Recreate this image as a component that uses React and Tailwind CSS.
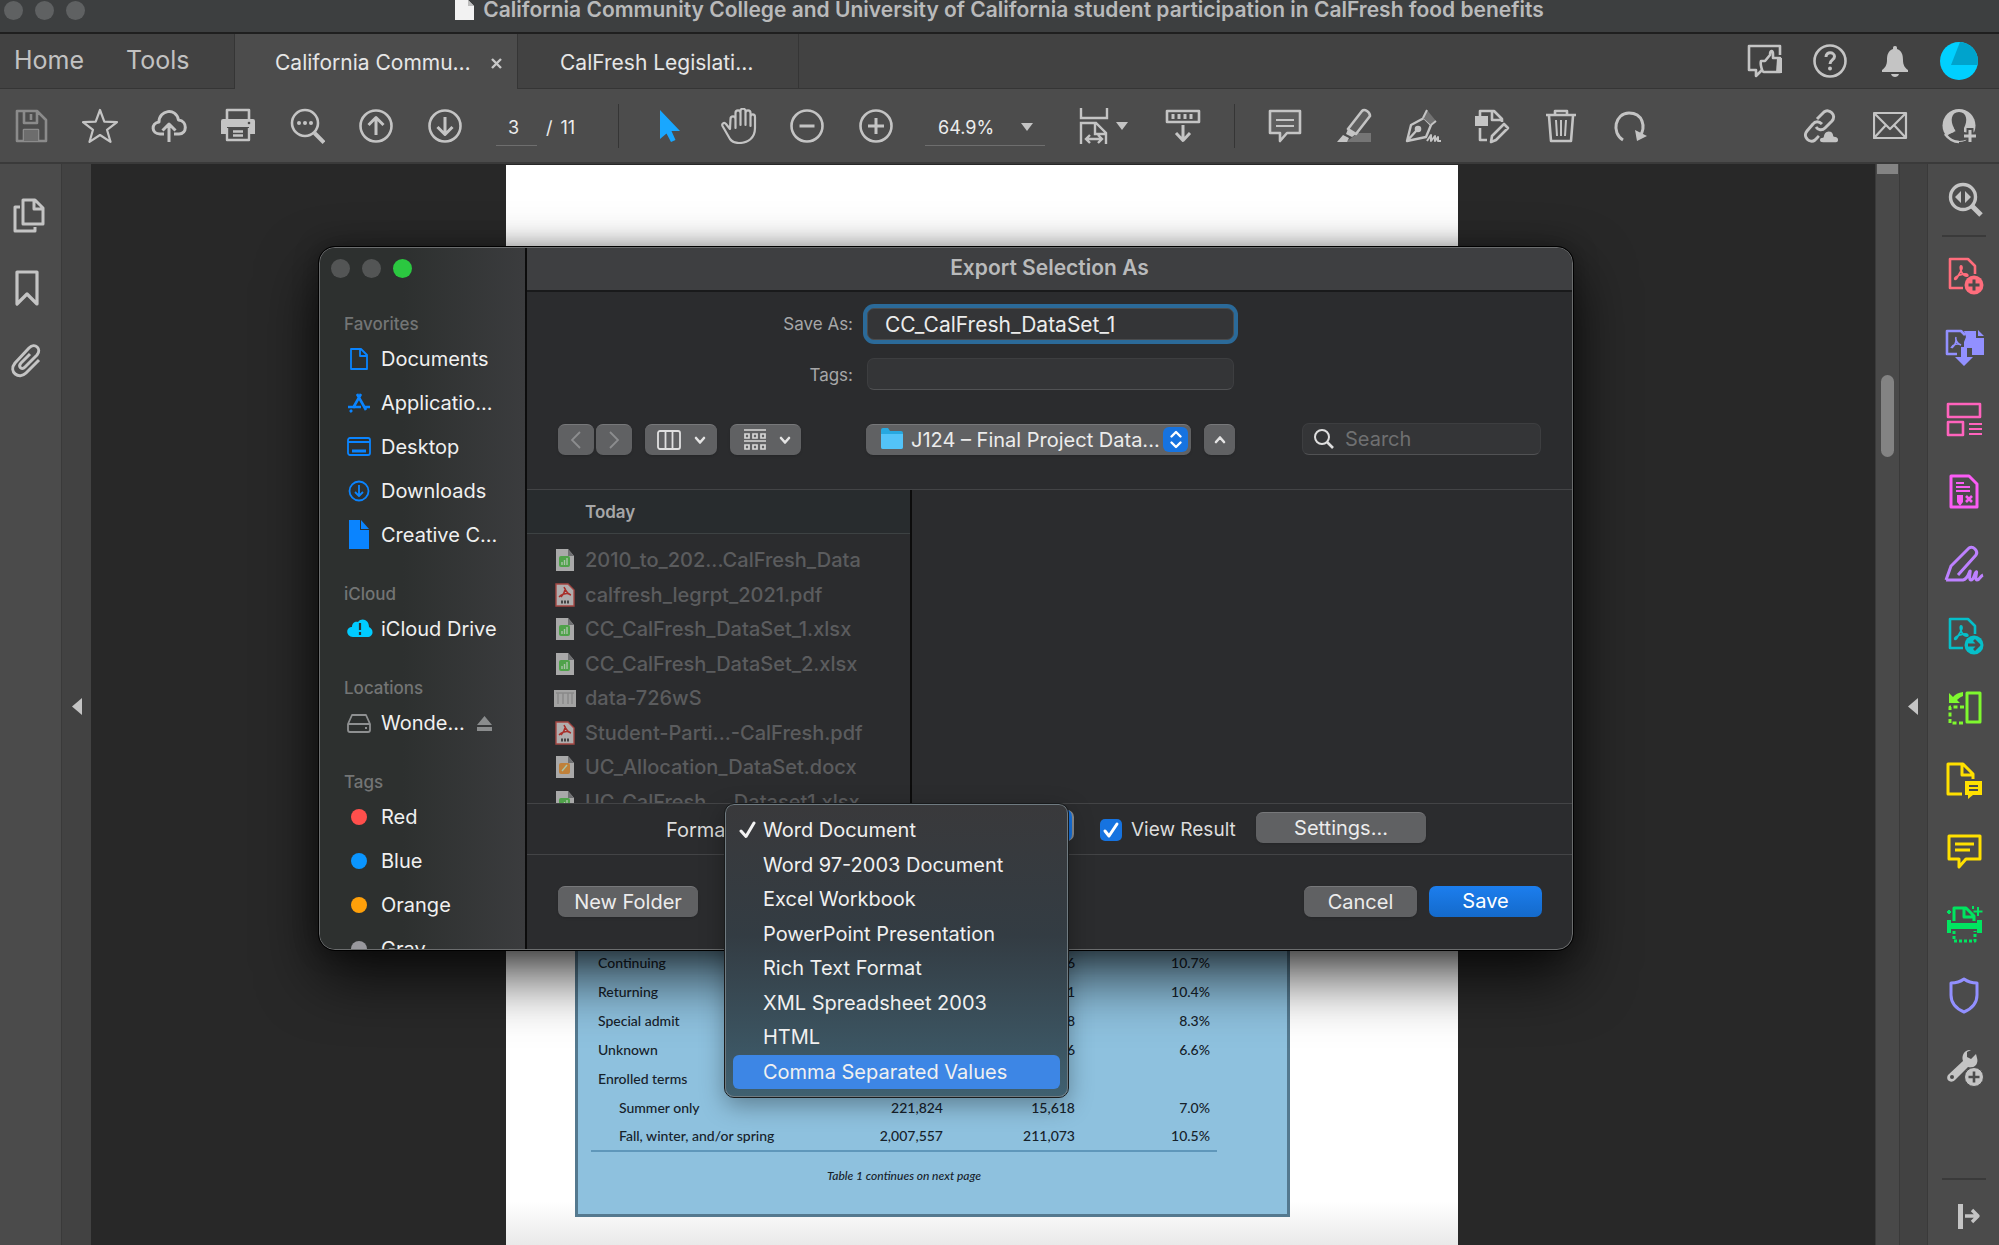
import React from "react";

const I = ({ size = 36, children, label, className = "" }) => (
  <svg
    viewBox={`0 0 ${size} ${size}`}
    width={size}
    height={size}
    fill="none"
    stroke="currentColor"
    strokeWidth="2.6"
    strokeLinejoin="round"
    aria-label={label}
    className={"shrink-0 " + className}
  >
    {children}
  </svg>
);

const ToolButton = ({ label, children, className = "" }) => (
  <button type="button" aria-label={label} className={"flex size-9 shrink-0 items-center justify-center " + className}>
    <I>{children}</I>
  </button>
);

const Divider = () => <div className="h-[44px] w-px shrink-0 bg-[#353535]" />;

const Acrobat = () => (
  <path
    strokeWidth="1.8"
    d="M17 10c-1 0-1 3 .5 6 1.500 3 4 4 5.500 4s1-2-2-2-9 2-10 4 1 2 2.500-1S18 14 18 12s-.3-2-1-2z"
  />
);

function TitleBar() {
  return (
    <header className="relative flex h-[34px] shrink-0 items-start justify-center border-b-2 border-[#1f1f1f] bg-[#3d3f40]">
      <div className="absolute top-px left-1 flex gap-3">
        <span className="size-[19px] rounded-full bg-[#5f6162]" />
        <span className="size-[19px] rounded-full bg-[#5f6162]" />
        <span className="size-[19px] rounded-full bg-[#5f6162]" />
      </div>
      <div className="flex h-5 items-center gap-[9px] text-[21px] leading-5 font-semibold whitespace-nowrap text-[#b9babb]">
        <svg width="19" height="20" viewBox="0 0 19 20" aria-hidden="true">
          <path d="M0 0h13l6 6v14H0z" fill="#f2f2f2" />
          <path d="M13 0v6h6z" fill="#bdbdbd" />
        </svg>
        <h1>California Community College and University of California student participation in CalFresh food benefits</h1>
      </div>
    </header>
  );
}

function TabBar() {
  return (
    <nav className="flex h-[55px] shrink-0 bg-[#424242] text-[#e6e6e6]">
      <div className="flex w-[235px] shrink-0 items-center gap-[42px] border-r border-b border-[#353535] pl-[14px] text-[25px] text-[#c2c2c2]">
        <button type="button">Home</button>
        <button type="button">Tools</button>
      </div>
      <div className="flex w-[282px] shrink-0 items-center justify-between bg-[#4c4c4c] pt-[3px] pr-[14px] pl-10 text-[21px]">
        <button type="button">California Commu…</button>
        <button type="button" aria-label="Close tab">
          <svg width="13" height="13" viewBox="0 0 13 13" stroke="#c8c8c8" strokeWidth="2.400">
            <path d="M2 2l9 9M11 2l-9 9" />
          </svg>
        </button>
      </div>
      <div className="flex w-[282px] shrink-0 items-center border-r border-b border-l border-[#353535] pt-1 pl-[42px] text-[21px]">
        <button type="button">CalFresh Legislati…</button>
      </div>
      <div className="flex grow items-center justify-end border-b border-[#353535] pr-[21px] text-[#c4c4c4]">
        <div className="mr-[27px] flex gap-[29px]">
          <button type="button" aria-label="Feedback">
            <I>
              <path d="M33 12V3H2v24h7v6l6-6" />
              <path d="M14 18h4l5-6c0-5 3-5 3-1v4h7v14H17c-2 0-4-8-3-11z" fill="#424242" />
              <path d="M30 15h5v15h-6z" fill="currentColor" stroke="none" />
            </I>
          </button>
          <button type="button" aria-label="Help">
            <I>
              <circle cx="18" cy="18" r="15.500" />
              <path d="M14 14c0-6 8.500-5 8.500-.5 0 3.500-4.500 3.500-4.500 7.500" strokeWidth="3" />
              <circle cx="18" cy="25.500" r="2" fill="currentColor" stroke="none" />
            </I>
          </button>
          <button type="button" aria-label="Notifications">
            <I>
              <path
                d="M18 3c2 0 2 1 2 3 5 2 6 6 6 11s2 8 5 10v2H5v-2c3-2 5-5 5-10s1-9 6-11c0-2 0-3 2-3zM14 31h8c-1 4-7 4-8 0z"
                fill="currentColor"
                stroke="none"
              />
            </I>
          </button>
        </div>
        <button type="button" aria-label="Account">
          <svg width="38" height="38" viewBox="0 0 38 38">
            <circle cx="19" cy="19" r="19" fill="#00d0ff" />
            <path d="M20 0A19 19 0 0 1 37.500 23H11z" fill="#00a3cc" />
          </svg>
        </button>
      </div>
    </nav>
  );
}

const Caret = () => (
  <svg width="12" height="8" viewBox="0 0 12 8" fill="#c4c4c4" className="shrink-0" aria-hidden="true">
    <path d="M0 0h12L6 8z" />
  </svg>
);

function ToolBar() {
  return (
    <div className="flex h-[75px] shrink-0 items-center border-b-2 border-[#3a3a3a] bg-[#4c4c4c] pt-px pr-[21px] pl-[13px] text-[#c4c4c4]">
      <div className="flex gap-[33px]">
        <ToolButton label="Save" className="text-[#8b8b8b]">
          <path d="M4 3h20l9 9v21H4zM11 3v12h13V3M18 6v6M11 33V22h14v11" />
          <path d="M11 22h14v11H11z" fill="#6d6d6d" stroke="none" />
        </ToolButton>
        <ToolButton label="Star">
          <path d="M18 2l4.300 11.600 12.700.5-10 7.700 3.500 12L18 27 7.500 33.800l3.500-12-10-7.700 12.700-.5z" strokeWidth="2.200" />
        </ToolButton>
        <ToolButton label="Upload">
          <path d="M13 26H9c-9 0-9-11-1-12C8 2 25-1 27.500 12 37 13 36 26 28 26h-5M18 34V17M11.500 22.500L18 16l6.500 6.500" strokeWidth="3" />
        </ToolButton>
        <ToolButton label="Print">
          <path d="M7 11V2h22v9" />
          <path d="M3 11h30q2 0 2 2v13h-6v-7H7v7H1V13q0-2 2-2z" fill="currentColor" stroke="none" />
          <path d="M7 20v12h22V20M13 23.500h10M13 27.500h10" strokeWidth="2.400" />
          <circle cx="29" cy="15" r="1.300" fill="#4c4c4c" stroke="none" />
        </ToolButton>
        <ToolButton label="Find">
          <circle cx="16" cy="15" r="13" />
          <path d="M25.500 25l9.500 9.500" strokeWidth="4" />
          <g fill="currentColor" stroke="none">
            <circle cx="10" cy="15" r="2" />
            <circle cx="16" cy="15" r="2" />
            <circle cx="22" cy="15" r="2" />
          </g>
        </ToolButton>
        <ToolButton label="Previous page">
          <circle cx="18" cy="18" r="15.500" />
          <path d="M18 27V10M10.500 17L18 9.500 25.500 17" strokeWidth="3" />
        </ToolButton>
        <ToolButton label="Next page">
          <circle cx="18" cy="18" r="15.500" />
          <path d="M18 9v17M10.500 19l7.500 7.500 7.500-7.500" strokeWidth="3" />
        </ToolButton>
      </div>
      <div className="ml-[33px] flex w-[122px] shrink-0 items-center text-[18px] text-[#ececec]">
        <input aria-label="Page" defaultValue="3" className="h-10 w-[41px] border-b border-[#6e6e6e] bg-transparent pt-[3px] pr-1.5 text-center" />
        <span className="ml-[9px] flex gap-2 pt-[3px]">
          <span>/</span>
          <span>11</span>
        </span>
      </div>
      <Divider />
      <div className="ml-[33px] flex gap-[33px]">
        <ToolButton label="Select">
          <path d="M8 2v29l6.500-5.500L19 34l4.500-2-4-9H28z" fill="#19a7ff" stroke="none" />
        </ToolButton>
        <ToolButton label="Hand">
          <path
            d="M9 21L5 16c-2-2.500-4.500 0-3.500 2L9 31q3 4 9 4c9 0 16-5 16-15V9c0-3.500-4.500-3.500-4.500 0v9-13c0-3.500-5-3.500-5 0v12V3c0-3-5-3-5 0v14V5c0-3.500-5-3.500-5 0v15-9c0-3.500-5-3.500-5 0z"
            strokeWidth="2.200"
          />
        </ToolButton>
        <ToolButton label="Zoom out">
          <circle cx="17" cy="18" r="15.500" />
          <path d="M9.500 18h15" strokeWidth="3" />
        </ToolButton>
        <ToolButton label="Zoom in">
          <circle cx="17" cy="18" r="15.500" />
          <path d="M9 18h16M17 10v16" strokeWidth="3" />
        </ToolButton>
      </div>
      <button type="button" className="ml-[30px] flex h-10 w-[120px] shrink-0 items-center justify-between border-b border-[#6e6e6e] pt-[3px] pr-3 pl-[13px] text-[18px] text-[#ececec]">
        64.9%
        <Caret />
      </button>
      <button type="button" aria-label="Fit" className="ml-[32px] flex w-[51px] shrink-0 items-center justify-between">
        <I>
          <path d="M4 0v10h26V0M4 36V15h15l10 10v11M18 15v11h11M9 31h16M13 27l-4 4 4 4M21 27l4 4-4 4" strokeWidth="2.400" strokeLinejoin="miter" />
        </I>
        <Caret />
      </button>
      <ToolButton label="Read mode" className="mr-[33px] ml-[37px]">
        <rect x="2" y="3" width="32" height="11" />
        <path d="M8 6v5M14 6v5M20 6v5M26 6v5" strokeWidth="3" />
        <path d="M18 17v15M11 25l7 7.500 7-7.500" strokeWidth="3" />
      </ToolButton>
      <Divider />
      <div className="ml-[32px] flex gap-[33px]">
        <ToolButton label="Comment">
          <path d="M3 3h30v22H20l-7 8v-8H3z" fill="#5e5e5e" />
          <path d="M9 12h18M9 18h18" strokeWidth="2" />
        </ToolButton>
        <ToolButton label="Highlight">
          <path d="M22 25h13v9H10z" fill="#757575" stroke="none" />
          <path d="M26 3q2-2 5 0t3 5L20 26l-8-5z" fill="#5e5e5e" />
          <path d="M12 21l8 5-4 3-6-3zM7 27l6 3-2 4H1z" fill="currentColor" stroke="none" />
        </ToolButton>
        <ToolButton label="Sign">
          <path d="M2 33L6 17l13-7 7 7-5 12zM2 33l10-11" strokeWidth="2.400" />
          <circle cx="13" cy="21" r="2" fill="currentColor" />
          <path d="M18 10l4-8 9 11-5 4z" fill="#727272" stroke="none" />
          <path d="M18 10l4-8M26 17l5-4M22 33l4-6v6l4-5v5l3-4v4h3" strokeWidth="2" />
        </ToolButton>
        <ToolButton label="Edit PDF">
          <path d="M6 9V3h14l8 8v3M18 3v9h10" />
          <path d="M1 8h13v10H1z" fill="currentColor" stroke="none" />
          <path d="M6 20v12h7M17 34l1-6 12-12 4 4-12 12z" />
        </ToolButton>
        <ToolButton label="Delete">
          <path d="M3 7h30M12 7V3h12v4M6 8l2 25h20l2-25" />
          <path d="M13 12l1 16M18 12v16M23 12l-1 16" strokeWidth="2" />
        </ToolButton>
        <ToolButton label="Rotate">
          <path d="M11 32C-1 25 3 5 17 5s17 14 11 23" strokeWidth="3" />
          <path d="M23 22l2 11 10-5z" fill="currentColor" stroke="none" />
        </ToolButton>
      </div>
      <div className="ml-auto flex gap-[33px]">
        <ToolButton label="Share link">
          <path d="M13 11l7-7c5-4 13 3 8 9l-7 7c-3 3-7 2-9-1M18 16c-3-3-7-3-9 0l-6 7c-5 6 3 13 8 9l4-4" strokeWidth="3" />
          <path d="M19 35c-5 0-5-6 0-6 1-8 10-8 11-1 6 0 6 7 2 7z" fill="currentColor" stroke="#4c4c4c" strokeWidth="1.500" />
        </ToolButton>
        <ToolButton label="Email">
          <path d="M1 5h32v25H1zM1 5l16 16L33 5M1 30l12-13M33 30L21 17" strokeWidth="2.200" />
        </ToolButton>
        <ToolButton label="Invite">
          <circle cx="17" cy="17.500" r="16.500" fill="currentColor" stroke="none" />
          <path d="M17 4c8 0 9 9 5 16v4l7 3-3 4q-9 4-18 0l-3-4 7-3v-4C8 13 9 4 17 4z" fill="#4c4c4c" stroke="none" />
          <path d="M5 26c4-3 6-3 8-4M3 26q6 8 14 8" strokeWidth="2.600" />
          <path d="M28 20v16M20 28h16" stroke="#4c4c4c" strokeWidth="7" />
          <path d="M28 22v12M22 28h12" strokeWidth="3" />
        </ToolButton>
      </div>
    </div>
  );
}

function LeftRail() {
  return (
    <>
      <aside className="flex w-[61px] shrink-0 flex-col gap-[37px] bg-[#4b4b4b] pt-[33px] pl-[9px] text-[#c4c4c4]">
        <ToolButton label="Page thumbnails">
          <path d="M14 3h12l8 8v16H14zM25 3v9h9" strokeWidth="3" />
          <path d="M11 10H6v24h20v-4" strokeWidth="3" />
        </ToolButton>
        <ToolButton label="Bookmarks">
          <path d="M8 2h20v32l-10-10L8 34z" strokeWidth="3.200" />
        </ToolButton>
        <ToolButton label="Attachments">
          <path d="M30 17L17 30c-7 7-18-1-11-10L20 5c6-6 13 1 8 7L16 24c-4 4-7-1-4-4l9-9" strokeWidth="3" />
        </ToolButton>
      </aside>
      <button type="button" aria-label="Expand navigation" className="flex w-[30px] shrink-0 items-center justify-center border-l border-[#3a3a3a] bg-[#424242] pt-1">
        <svg width="10" height="17" viewBox="0 0 10 17" fill="#c4c4c4">
          <path d="M10 0v17L0 8.500z" />
        </svg>
      </button>
    </>
  );
}

const tools = [
  ["Create PDF", "text-[#ff6d7c]", (
    <>
      <path d="M19 32H6V3h18l7 7v8" />
      <Acrobat />
      <circle cx="30" cy="29" r="9.500" fill="currentColor" stroke="none" />
      <path d="M30 23.500v11M24.500 29h11" stroke="#4b4b4b" strokeWidth="3" />
    </>
  )],
  ["Export PDF", "text-[#9290ff]", (
    <>
      <path d="M13 26H3V3h14l4 4" />
      <path strokeWidth="1.600" d="M12 9c-1 2 1 7 5 8M7 20c2-4 7-5 10-3M12 12c0 3-2 6-4 8" />
      <path d="M20 3h12v7h8v17H28v-7h-8v-6l2-5zM34 2l6 6h-6z" fill="currentColor" stroke="none" />
      <path d="M17 19h6v10h6l-9 9-9-9h6z" fill="currentColor" stroke="none" />
    </>
  )],
  ["Organize Pages", "text-[#ff63bd]", (
    <>
      <rect x="4" y="4" width="32" height="13" />
      <rect x="4" y="22" width="15" height="13" />
      <path d="M25 24h13M25 29h13M25 34h13" strokeWidth="1.800" />
    </>
  )],
  ["Prepare Form", "text-[#fb5cf5]", (
    <>
      <path d="M7 4h18l8 8v23H7z" strokeWidth="3" />
      <path d="M12 11h8M12 15h14M12 19h14" strokeWidth="1.800" />
      <path d="M13 23h6v7l-3 4-3-4z" fill="currentColor" stroke="none" />
      <path d="M22 24l6 6M28 24l-6 6" />
    </>
  )],
  ["Fill & Sign", "text-[#bd81ff]", (
    <path d="M2 36l5-14L25 4q3-2 6 1t1 6L14 31M2 36h17c5-1 6-8 7-9s-2 9 1 9 3-6 5-8-2 8 1 8 3-4 6-5" strokeWidth="3" />
  )],
  ["Send for Review", "text-[#06bfc9]", (
    <>
      <path d="M19 32H6V3h18l7 7v8" />
      <Acrobat />
      <circle cx="30" cy="29" r="9.500" fill="currentColor" stroke="none" />
      <path d="M24 29h10M30 24l5 5-5 5" stroke="#4b4b4b" strokeWidth="2.800" />
    </>
  )],
  ["Compare Files", "text-[#7ff82f]", (
    <>
      <rect x="23" y="5" width="13" height="29" strokeWidth="3" />
      <path d="M20 19H6v16h14" strokeDasharray="4 2.500" strokeWidth="3" />
      <path d="M5 5v10h11l-3-3q3-3 6-4V4q-7 1-10 5z" fill="currentColor" stroke="none" />
    </>
  )],
  ["Combine Files", "text-[#ffe000]", (
    <>
      <path d="M18 34H4V4h15l10 10v5M18 4v11h11" strokeWidth="3" />
      <path d="M21 21h17v14H29l-5 4v-4h-3z" fill="currentColor" stroke="none" />
      <path d="M25 26h9M25 30h9" stroke="#4b4b4b" strokeWidth="1.800" />
    </>
  )],
  ["Comment", "text-[#ffe000]", (
    <>
      <path d="M5 4h31v23H22l-7 8v-8H5z" strokeWidth="3" />
      <path d="M11 12h19M11 18h15" strokeWidth="3" />
    </>
  )],
  ["Scan & OCR", "text-[#00e560]", (
    <>
      <path d="M10 17V4h12l8 8v5M20 4v9h9" strokeWidth="3" />
      <path d="M3 16h4v3h26v-3h5v13h-5v-4H7v4H3z" fill="currentColor" stroke="none" />
      <path d="M10 27v10h21V27" strokeDasharray="3 2" strokeWidth="3" />
      <path d="M34 3v9M29.500 7.500h9M5 6v4M3 8h4M29 2v3" strokeWidth="2" />
    </>
  )],
  ["Protect", "text-[#9290ff]", (
    <path d="M20 3c4 3 9 4 13 4v12c0 9-6 14-13 17C13 33 7 28 7 19V7c4 0 9-1 13-4z" strokeWidth="3" />
  )],
  ["More Tools", "text-[#c4c4c4]", (
    <>
      <path d="M32 6l-5 5-4-2v-5l4-2c-6-1-10 5-8 11L4 27c-3 5 3 9 7 5l13-13c6 2 11-3 9-9z" fill="currentColor" stroke="none" />
      <circle cx="8" cy="29" r="2" fill="#4b4b4b" stroke="none" />
      <circle cx="30" cy="29" r="9.500" fill="currentColor" stroke="#4b4b4b" strokeWidth="1" />
      <path d="M30 23.500v11M24.500 29h11" stroke="#4b4b4b" strokeWidth="2.600" />
    </>
  )],
];

function RightRail() {
  return (
    <>
      <div className="flex w-6 shrink-0 flex-col items-center border-l border-[#3a3a3a] bg-[#494949]">
        <div className="h-[10px] w-[21px] bg-[#838383]" />
        <div className="mt-[201px] h-[82px] w-[13px] rounded-full bg-[#838383]" />
      </div>
      <button type="button" aria-label="Expand tools" className="flex w-[29px] shrink-0 items-center justify-center border-x border-[#3a3a3a] bg-[#424242] pt-1 pr-0.5">
        <svg width="10" height="17" viewBox="0 0 10 17" fill="#c4c4c4">
          <path d="M10 0v17L0 8.500z" />
        </svg>
      </button>
      <aside className="flex w-[71px] shrink-0 flex-col items-center bg-[#4b4b4b]">
        <button type="button" aria-label="Search tools" className="mt-[14px] text-[#c4c4c4]">
          <I size={40}>
            <circle cx="19" cy="19" r="12.500" strokeWidth="3.400" />
            <path d="M28 28l9 9" strokeWidth="5" />
            <path d="M17 13v12l-6-6zM21 13v12l6-6z" fill="currentColor" stroke="none" />
          </I>
        </button>
        <div className="mt-[17px] mb-[3px] h-[2px] w-[44px] shrink-0 bg-[#3a3a3a]" />
        {tools.map(([label, color, icon]) => (
          <button key={label} type="button" aria-label={label} className={"flex h-[72px] shrink-0 items-center " + color}>
            <I size={40}>{icon}</I>
          </button>
        ))}
        <div className="mt-auto h-[2px] w-[44px] bg-[#3a3a3a]" />
        <button type="button" aria-label="Collapse tools" className="mt-4 mb-[9px] text-[#c4c4c4]">
          <I size={40}>
            <path d="M14 8h5v25h-5z" fill="currentColor" stroke="none" />
            <path d="M21 20h12M28 14l6 6-6 6" strokeWidth="3.400" />
          </I>
        </button>
      </aside>
    </>
  );
}

const rows = [
  ["Continuing", "", "6", "10.7%"],
  ["Returning", "", "1", "10.4%"],
  ["Special admit", "", "8", "8.3%"],
  ["Unknown", "", "6", "6.6%"],
  ["Enrolled terms", "", "", ""],
  ["Summer only", "221,824", "15,618", "7.0%"],
  ["Fall, winter, and/or spring", "2,007,557", "211,073", "10.5%"],
];

function DocumentPage() {
  return (
    <main className="flex min-w-0 grow justify-center overflow-hidden bg-[#282828] pt-px pr-0.5">
      <div className="flex w-[952px] shrink-0 flex-col justify-end bg-linear-to-t from-[#e9e9e9] to-white to-4% px-[69px] pb-[28px]">
        <section className="flex h-[640px] w-[715px] flex-col justify-end border-[3px] border-[#54798f] bg-[#8ec1de] px-[13px] pb-[28px] text-[#16222b]">
          <table className="w-[626px] border-b-2 border-[#5f97ba] font-[Lato,sans-serif] text-[14px] leading-5 font-medium">
            <tbody>
              {rows.map(([name, total, count, share], i) => (
                <tr key={name} className="h-[29px]">
                  <th scope="row" className={"text-left font-medium whitespace-nowrap " + (i > 4 ? "pl-7" : "pl-[7px]")}>{name}</th>
                  <td className="w-[130px] text-right">{total}</td>
                  <td className="w-[132px] text-right">{count}</td>
                  <td className="w-[142px] pr-[7px] text-right">{share}</td>
                </tr>
              ))}
            </tbody>
          </table>
          <p className="mt-[14px] w-[626px] text-center font-[Lato,sans-serif] text-[12px] leading-5 font-medium italic">Table 1 continues on next page</p>
        </section>
      </div>
    </main>
  );
}

const BlueIcon = ({ children, color = "#0a84ff" }) => (
  <svg width="24" height="30" viewBox="0 0 24 30" fill="none" stroke={color} strokeWidth="1.800" strokeLinejoin="round" className="shrink-0" aria-hidden="true">
    {children}
  </svg>
);

const Dot = ({ color }) => (
  <BlueIcon>
    <circle cx="12" cy="15" r="8" fill={color} stroke="none" />
  </BlueIcon>
);

const sections = [
  ["Favorites", [
    ["Documents", <BlueIcon><path d="M4 5h10l6 6v14H4zM13 5v7h7" /></BlueIcon>],
    ["Applicatio...", (
      <BlueIcon>
        <path d="M10 6l9 16M14 6L6 20M1 19h13M18 19h5M5 22l-2 2" strokeWidth="2.600" />
      </BlueIcon>
    )],
    ["Desktop", <BlueIcon><rect x="1" y="6" width="22" height="17" rx="2" /><path d="M1 10h22" /><path d="M5 19h14" strokeWidth="3" /></BlueIcon>],
    ["Downloads", <BlueIcon><circle cx="12" cy="15" r="9.500" /><path d="M12 9v11M8 16l4 4 4-4" /></BlueIcon>],
    ["Creative C...", <BlueIcon><path d="M2 0h11v10h9v19H2zM14 0l8 9h-8z" fill="#0a84ff" stroke="none" /></BlueIcon>],
  ]],
  ["iCloud", [
    ["iCloud Drive", (
      <svg width="26" height="30" viewBox="0 0 26 30" className="-mr-0.5 shrink-0" aria-hidden="true">
        <path d="M6 23c-8-1-7-10-1-10C5 8 9 7 11 8c4-5 11-2 11 5 5 2 5 10-2 10z" fill="#00cbff" />
        <path d="M13 9v7M13 18v3" stroke="#2d302f" strokeWidth="2.200" />
      </svg>
    )],
  ]],
  ["Locations", [
    ["Wonde...", <BlueIcon color="#8e9091"><path d="M5 7h14l4 9v6q0 2-2 2H3q-2 0-2-2v-6zM1 16h22M18 20h2" /></BlueIcon>],
  ]],
  ["Tags", [
    ["Red", <Dot color="#ff4f4c" />],
    ["Blue", <Dot color="#0a95ff" />],
    ["Orange", <Dot color="#ffa00a" />],
    ["Gray", <Dot color="#98989d" />],
  ]],
];

function DialogSidebar() {
  return (
    <aside className="w-[207px] shrink-0 overflow-hidden border-r-2 border-[#0c0c0c] bg-linear-to-r from-[#2d302f] from-40% to-[#3b3c3e]">
      <div className="flex gap-3 pt-[11px] pl-[11px]">
        <span className="size-[19px] rounded-full bg-[#535555]" />
        <span className="size-[19px] rounded-full bg-[#535555]" />
        <span className="size-[19px] rounded-full bg-[#2bc840]" />
      </div>
      <div className="mt-[33px] flex flex-col gap-6">
        {sections.map(([title, items]) => (
          <section key={title}>
            <h2 className="pl-6 text-[17px] leading-[26px] font-medium text-[#737575]">{title}</h2>
            <ul>
              {items.map(([name, icon]) => (
                <li key={name}>
                  <button type="button" className="flex h-11 w-full items-center gap-[10px] pl-[27px] text-[20px] whitespace-nowrap text-[#f0f0f0]">
                    {icon}
                    {name}
                    {title === "Locations" && (
                      <svg width="15" height="15" viewBox="0 0 15 15" fill="#8a8c8d" className="ml-0.5" aria-label="Eject">
                        <path d="M7.500 0L15 9H0zM0 11h15v4H0z" />
                      </svg>
                    )}
                  </button>
                </li>
              ))}
            </ul>
          </section>
        ))}
      </div>
    </aside>
  );
}

const SheetIcon = ({ color, pen }) => (
  <svg width="22" height="24" viewBox="0 0 22 24" aria-hidden="true">
    <path d="M2 1h12l6 7v15H2z" fill="#a9a9a9" />
    <path d="M14 1v7h6z" fill="#6f7072" />
    <rect x="5" y="8" width="11" height="11" rx="2" fill={color} />
    <path d={pen ? "M8 16l5-6" : "M8 17v-3M10.500 17v-5M13 17v-7"} stroke="#a9c4a7" strokeWidth="1.400" />
  </svg>
);

const PdfIcon = () => (
  <svg width="22" height="24" viewBox="0 0 22 24" fill="none" aria-hidden="true">
    <path d="M2 1h12l6 6v16H2z" fill="#b0adad" stroke="#a54743" strokeWidth="1.400" />
    <path d="M10 4c2 4 3 7 7 8M5 14c3-3 7-4 11-3M11 5c0 4-2 7-4 9" stroke="#a82f2a" strokeWidth="1.500" />
    <path d="M7 19h8" stroke="#444" strokeWidth="3" strokeDasharray="2 1" />
  </svg>
);

const GridIcon = () => (
  <svg width="22" height="24" viewBox="0 0 22 24" aria-hidden="true">
    <path d="M0 4h22v17H0z" fill="#a3a3a3" />
    <path d="M2 7h18M4 7v11M9 7v11M14 7v11M18 7v11" stroke="#8a8a8a" strokeWidth="1.500" />
  </svg>
);

const xls = <SheetIcon color="#4fa24a" />;
const files = [
  ["2010_to_202...CalFresh_Data", xls],
  ["calfresh_legrpt_2021.pdf", <PdfIcon />],
  ["CC_CalFresh_DataSet_1.xlsx", xls],
  ["CC_CalFresh_DataSet_2.xlsx", xls],
  ["data-726wS", <GridIcon />],
  ["Student-Parti...-CalFresh.pdf", <PdfIcon />],
  ["UC_Allocation_DataSet.docx", <SheetIcon color="#c0813a" pen />],
  ["UC_CalFresh_...Dataset1.xlsx", xls],
];

const formats = [
  "Word Document",
  "Word 97-2003 Document",
  "Excel Workbook",
  "PowerPoint Presentation",
  "Rich Text Format",
  "XML Spreadsheet 2003",
  "HTML",
  "Comma Separated Values",
];

const Chevron = ({ d, w = 2.6, color = "#e4e4e4" }) => (
  <svg width="14" height="14" viewBox="0 0 14 14" fill="none" stroke={color} strokeWidth={w} className="shrink-0" aria-hidden="true">
    <path d={d} strokeLinecap="round" strokeLinejoin="round" />
  </svg>
);

const greyButton = "flex h-[31px] shrink-0 items-center justify-center rounded-[7px] border-t border-[#77787a] bg-[#606163] text-[20px] text-[#ececec] shadow-sm";

function FormatMenu() {
  return (
    <ul
      role="listbox"
      aria-label="Format"
      className="absolute top-0 left-[198px] z-10 grid h-[293px] w-[343px] grid-rows-8 rounded-[9px] border border-[#6f7a80] bg-linear-to-b from-[#39393b] via-[#333c43] via-45% to-[#3f6070] px-[7px] pt-2 pb-[7px] text-[20px] text-[#f0f0f0] shadow-[0_8px_24px_rgba(0,0,0,0.35)] outline outline-[#191b1c]"
    >
      {formats.map((name, i) => (
        <li
          key={name}
          role="option"
          aria-selected={i === 0}
          className={"flex items-center rounded-md pl-[6px] whitespace-nowrap " + (i === 7 ? "bg-[#3d86e5]" : "")}
        >
          <span className="flex w-6 shrink-0">
            {i === 0 && (
              <svg width="18" height="18" viewBox="0 0 18 18" fill="none" stroke="#f2f2f2" strokeWidth="3" aria-hidden="true">
                <path d="M2 10l5 5.500L15 2" strokeLinecap="round" strokeLinejoin="round" />
              </svg>
            )}
          </span>
          {name}
        </li>
      ))}
    </ul>
  );
}

function ExportDialog() {
  return (
    <div
      role="dialog"
      aria-labelledby="export-title"
      className="absolute top-[247px] left-[319px] flex h-[703px] w-[1254px] rounded-[16px] bg-[#2b2c2e] shadow-[0_26px_60px_rgba(0,0,0,0.75),0_0_24px_rgba(0,0,0,0.35)] outline outline-black"
    >
      <div className="flex min-w-0 grow rounded-[16px] border border-[#6b6d6e]">
        <div className="flex shrink-0 overflow-hidden rounded-l-[15px]">
          <DialogSidebar />
        </div>
        <div className="flex min-w-0 grow flex-col">
          <h2 id="export-title" className="flex h-[44px] shrink-0 items-center justify-center rounded-tr-[15px] border-b-2 border-[#191a1b] bg-[#3e3f41] pb-0.5 text-[21px] font-semibold text-[#b9babb]">
            Export Selection As
          </h2>
          <form className="flex h-[197px] shrink-0 flex-col pl-[31px] text-[#a6a7a8]" onSubmit={(e) => e.preventDefault()}>
            <div className="mt-4 flex items-center">
              <label htmlFor="save-as" className="w-[295px] pt-0.5 text-right text-[17px]">Save As:</label>
              <input
                id="save-as"
                defaultValue="CC_CalFresh_DataSet_1"
                className="ml-[14px] h-[32px] w-[367px] rounded-[7px] border border-[#4a4c4e] bg-[#343537] px-[17px] text-[21px] text-[#ececec] ring-4 ring-[#2b6a99] outline-none"
              />
            </div>
            <div className="mt-[18px] flex items-center">
              <label htmlFor="tags" className="w-[295px] pt-[3px] text-right text-[17px]">Tags:</label>
              <input id="tags" className="ml-[14px] h-[32px] w-[367px] rounded-[7px] border border-[#3d3e40] border-b-[#515254] bg-[#343537]" />
            </div>
            <div className="mt-[33px] flex items-center">
              <button type="button" aria-label="Back" className={greyButton + " w-[36px]"}>
                <svg width="10" height="20" viewBox="0 0 10 20" fill="none" stroke="#8c8d8f" strokeWidth="1.800"><path d="M9 2L1 10l8 8" /></svg>
              </button>
              <button type="button" aria-label="Forward" className={greyButton + " ml-[2px] w-[36px]"}>
                <svg width="10" height="20" viewBox="0 0 10 20" fill="none" stroke="#8c8d8f" strokeWidth="1.800"><path d="M1 2l8 8-8 8" /></svg>
              </button>
              <button type="button" aria-label="Column view" className={greyButton + " ml-[13px] w-[72px] gap-3 pl-0.5"}>
                <svg width="24" height="20" viewBox="0 0 24 20" fill="none" stroke="#e0e0e0" strokeWidth="1.800"><rect x="1" y="1" width="22" height="18" rx="2" /><path d="M8.500 1v18M15.500 1v18" /></svg>
                <Chevron d="M3 5l4 4.500L11 5" />
              </button>
              <button type="button" aria-label="Group by" className={greyButton + " ml-[13px] w-[71px] gap-3 pl-1"}>
                <svg width="22" height="22" viewBox="0 0 22 22" fill="none" stroke="#d8d8d8" strokeWidth="1.700">
                  <path d="M0 1h22M0 12h22" />
                  <path d="M1 5h4v4H1zM9 5h4v4H9zM17 5h4v4h-4zM1 16h4v4H1zM9 16h4v4H9zM17 16h4v4h-4z" />
                </svg>
                <Chevron d="M3 5l4 4.500L11 5" />
              </button>
              <div className="relative ml-[65px] h-[31px] w-[325px] shrink-0">
                <select aria-label="Where" className={greyButton + " w-full appearance-none pr-8 pb-0.5 pl-[45px] outline-none"}>
                  <option>J124 – Final Project Data...</option>
                </select>
                <svg width="24" height="22" viewBox="0 0 24 22" className="pointer-events-none absolute top-1 left-[14px]" aria-hidden="true">
                  <path d="M1 2q0-2 2-2h5l2 3h11q2 0 2 2v14q0 2-2 2H3q-2 0-2-2z" fill="#27a8e0" />
                  <path d="M1 6h22v13q0 2-2 2H3q-2 0-2-2z" fill="#53c3f8" />
                </svg>
                <span className="pointer-events-none absolute top-[3px] right-[3px] flex h-[25px] w-[25px] flex-col items-center justify-center rounded-[6px] bg-[#1673e0]">
                  <svg width="14" height="19" viewBox="0 0 14 19" fill="none" stroke="#fff" strokeWidth="2.400" strokeLinecap="round" strokeLinejoin="round"><path d="M2.500 6.500L7 2l4.500 4.500M2.500 12.500L7 17l4.500-4.500" /></svg>
                </span>
              </div>
              <button type="button" aria-label="Collapse" className={greyButton + " ml-[13px] w-[31px]"}>
                <Chevron d="M3 9l4-4.500L11 9" />
              </button>
              <div className="ml-[67px] flex h-[32px] w-[239px] items-center gap-[11px] rounded-[7px] border border-[#3d3e40] border-b-[#515254] bg-[#343537] pl-[11px]">
                <svg width="20" height="20" viewBox="0 0 20 20" fill="none" stroke="#dedede" strokeWidth="2" className="shrink-0" aria-hidden="true">
                  <circle cx="8" cy="8" r="7" />
                  <path d="M13 13l6 6" strokeWidth="2.600" />
                </svg>
                <input type="search" aria-label="Search" placeholder="Search" className="w-full bg-transparent text-[20px] outline-none placeholder:text-[#6f7071]" />
              </div>
            </div>
          </form>
          <div className="flex h-[314px] shrink-0 overflow-hidden border-t border-[#434446]">
            <div className="w-[385px] shrink-0 border-r-2 border-[#0c0c0c]">
              <h3 className="flex h-[44px] items-center border-b border-[#3d4243] bg-[#282c2e] pt-0.5 pl-[58px] text-[17px] font-semibold text-[#a6a7a8]">Today</h3>
              <ul className="mt-[9px] grid h-[276px] grid-rows-8 pl-[27px] text-[20px] font-medium text-[#5b5c5e]">
                {files.map(([name, icon]) => (
                  <li key={name} className="flex items-center gap-[9px] whitespace-nowrap">
                    {icon}
                    {name}
                  </li>
                ))}
              </ul>
            </div>
          </div>
          <div className="relative flex h-[52px] shrink-0 items-center border-y border-[#434446] pl-[139px] text-[20px] text-[#dcdcdc]">
            <label htmlFor="format" className="pt-0.5">Format:</label>
            <select id="format" className="absolute top-[6px] left-[207px] h-[31px] w-[340px] appearance-none rounded-[7px] border-r-2 border-[#8a8c8f] bg-[#1673e0] text-[#ececec]">
              {formats.map((name) => (
                <option key={name}>{name}</option>
              ))}
            </select>
            <FormatMenu />
            <label className="absolute top-[14px] left-[573px] flex items-center gap-[9px] text-[19px] leading-6 whitespace-nowrap">
              <span className="relative flex">
                <input type="checkbox" defaultChecked className="size-[22px] appearance-none rounded-[5px] bg-[#1673e0]" />
                <svg width="22" height="22" viewBox="0 0 22 22" fill="none" stroke="#fff" strokeWidth="3" className="pointer-events-none absolute" aria-hidden="true">
                  <path d="M5 12l4 5 8-12" strokeLinecap="round" strokeLinejoin="round" />
                </svg>
              </span>
              View Result
            </label>
            <button type="button" className={greyButton + " mr-[146px] mb-1 ml-auto w-[170px]"}>Settings...</button>
          </div>
          <div className="flex grow items-center gap-3 pr-[30px] pb-0.5 pl-[31px]">
            <button type="button" className={greyButton + " w-[140px]"}>New Folder</button>
            <button type="button" className={greyButton + " ml-auto w-[113px]"}>Cancel</button>
            <button type="button" className="h-[31px] w-[113px] rounded-[7px] bg-linear-to-b from-[#1c7eee] to-[#146acb] text-[20px] text-white">Save</button>
          </div>
        </div>
      </div>
    </div>
  );
}

export default function App() {
  return (
    <div className="relative flex h-screen flex-col overflow-hidden bg-[#282828] font-[Inter,sans-serif]">
      <TitleBar />
      <TabBar />
      <ToolBar />
      <div className="flex min-h-0 grow">
        <LeftRail />
        <DocumentPage />
        <RightRail />
      </div>
      <ExportDialog />
    </div>
  );
}
